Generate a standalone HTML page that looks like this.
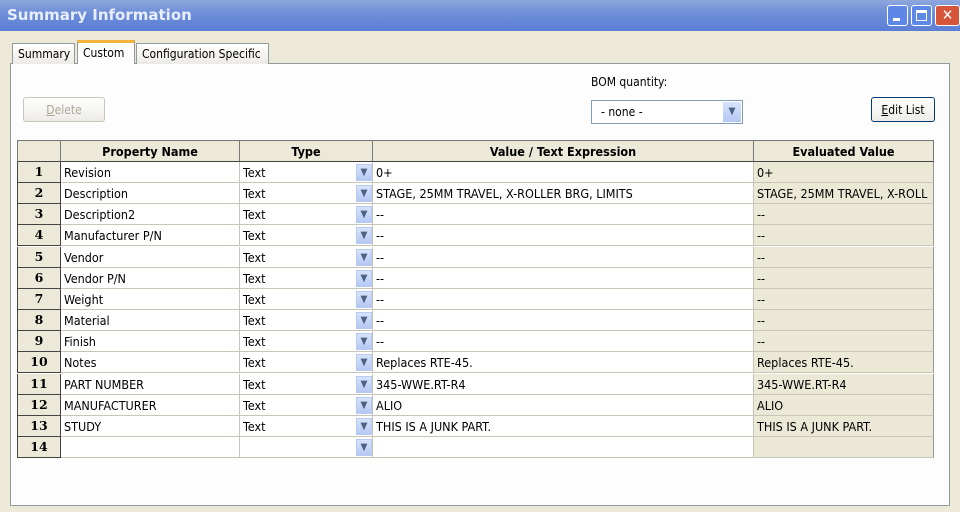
<!DOCTYPE html>
<html><head><style>
*{margin:0;padding:0;box-sizing:border-box}
body{width:960px;height:512px;overflow:hidden;background:#ece9d8;font-family:Tahoma,"DejaVu Sans Condensed","Liberation Sans",sans-serif;font-size:12px;color:#000;position:relative}
.a{position:absolute}
.title{left:0;top:0;width:960px;height:31px;background:linear-gradient(#8fa6dc,#6f8fd8 40%,#5b7fd6);color:#e8eefb;font-weight:bold;font-size:15px;padding:6px 0 0 7px;font-family:"DejaVu Sans","Liberation Sans",sans-serif}
.wb{top:5px;width:21px;height:21px;border:1px solid #fff;border-radius:3px;background:#5d88e8}
.tab{top:43px;height:21px;border:1px solid #919b9c;border-bottom:none;background:linear-gradient(#fff,#ecebe6);padding:3px 5px;font-size:12px;white-space:nowrap}
.panel{left:10px;top:63px;width:940px;height:443px;background:#fdfdfd;border:1px solid #919b9c}
.btn{border:1px solid #003c74;border-radius:3px;background:linear-gradient(#fff,#ecebe6);text-align:center;font-size:12px}
.grid{left:17px;top:140px;width:917px}
.r{position:absolute;left:0;width:917px;height:21px}
.c{position:absolute;top:0;height:21px;border-right:1px solid #c8c6b8;border-bottom:1px solid #c8c6b8;padding:3px 0 0 3px;white-space:nowrap;overflow:hidden;font-size:12.5px}
.n{left:0;width:44px;background:#ece9d8;border:1px solid #444;border-top:none;text-align:center;font-weight:bold;font-family:"DejaVu Serif","Liberation Serif",serif;padding-left:0;padding-top:2px}
.p{left:44px;width:179px;background:#fff}
.t{left:223px;width:133px;background:#fff}
.v{left:356px;width:381px;background:#fff}
.e{left:737px;width:180px;background:#ebe8d6;border-right:1px solid #999}
.dd{position:absolute;left:339px;top:2px;width:16px;height:17px;background:linear-gradient(#d8e4fb,#b4c8f3);border:1px solid #b7c9ee;color:#4d6185;font-size:10px;text-align:center;line-height:15px}
.h{position:absolute;top:0;height:22px;background:#ece9d8;border-right:1px solid #777;border-top:1px solid #777;border-bottom:1px solid #444;text-align:center;font-weight:bold;padding-top:3px;font-size:12.5px}
</style></head><body>
<div class="a title">Summary Information</div>
<div class="a wb" style="left:887px"><div style="position:absolute;left:5px;top:12px;width:7px;height:3px;background:#fff"></div></div>
<div class="a wb" style="left:911px"><div style="position:absolute;left:4px;top:4px;width:11px;height:11px;border:1px solid #fff;border-top-width:3px"></div></div>
<div class="a wb" style="left:935px;width:25px;background:#d6543a;color:#fff;font-weight:bold;font-size:15px;line-height:18px;text-align:center">✕</div>
<div class="a panel"></div>
<div class="a tab" style="left:12px;width:63px">Summary</div>
<div class="a tab" style="left:77px;top:40px;height:24px;width:58px;border-top:3px solid #f4b43c;background:#fdfdfd">Custom</div>
<div class="a tab" style="left:136px;width:133px">Configuration Specific</div>
<div class="a btn" style="left:23px;top:97px;width:82px;height:25px;color:#aca899;border-color:#c9c7ba;padding-top:5px"><u>D</u>elete</div>
<div class="a" style="left:591px;top:75px">BOM quantity:</div>
<div class="a" style="left:591px;top:100px;width:152px;height:24px;background:#fff;border:1px solid #7f9db9;padding:4px 0 0 9px">- none -<div style="position:absolute;right:1px;top:1px;width:18px;height:20px;background:linear-gradient(#d8e4fb,#b4c8f3);color:#4d6185;font-size:10px;text-align:center;line-height:20px">▼</div></div>
<div class="a btn" style="left:871px;top:97px;width:64px;height:25px;padding-top:5px"><u>E</u>dit List</div>
<div class="a grid">
<div class="h" style="left:0;width:44px;border-left:1px solid #777"></div>
<div class="h" style="left:44px;width:179px">Property Name</div>
<div class="h" style="left:223px;width:133px">Type</div>
<div class="h" style="left:356px;width:381px">Value / Text Expression</div>
<div class="h" style="left:737px;width:180px">Evaluated Value</div>
</div>
<div class="a" style="left:17px;top:162px;width:917px">
<div class="r" style="top:0"><div class="c n">1</div><div class="c p">Revision</div><div class="c t">Text</div><div class="dd">▼</div><div class="c v">0+</div><div class="c e">0+</div></div>
<div class="r" style="top:21px"><div class="c n">2</div><div class="c p">Description</div><div class="c t">Text</div><div class="dd">▼</div><div class="c v">STAGE, 25MM TRAVEL, X-ROLLER BRG, LIMITS</div><div class="c e">STAGE, 25MM TRAVEL, X-ROLL</div></div>
<div class="r" style="top:42px"><div class="c n">3</div><div class="c p">Description2</div><div class="c t">Text</div><div class="dd">▼</div><div class="c v">--</div><div class="c e">--</div></div>
<div class="r" style="top:63px"><div class="c n">4</div><div class="c p">Manufacturer P/N</div><div class="c t">Text</div><div class="dd">▼</div><div class="c v">--</div><div class="c e">--</div></div>
<div class="r" style="top:85px"><div class="c n">5</div><div class="c p">Vendor</div><div class="c t">Text</div><div class="dd">▼</div><div class="c v">--</div><div class="c e">--</div></div>
<div class="r" style="top:106px"><div class="c n">6</div><div class="c p">Vendor P/N</div><div class="c t">Text</div><div class="dd">▼</div><div class="c v">--</div><div class="c e">--</div></div>
<div class="r" style="top:127px"><div class="c n">7</div><div class="c p">Weight</div><div class="c t">Text</div><div class="dd">▼</div><div class="c v">--</div><div class="c e">--</div></div>
<div class="r" style="top:148px"><div class="c n">8</div><div class="c p">Material</div><div class="c t">Text</div><div class="dd">▼</div><div class="c v">--</div><div class="c e">--</div></div>
<div class="r" style="top:169px"><div class="c n">9</div><div class="c p">Finish</div><div class="c t">Text</div><div class="dd">▼</div><div class="c v">--</div><div class="c e">--</div></div>
<div class="r" style="top:190px"><div class="c n">10</div><div class="c p">Notes</div><div class="c t">Text</div><div class="dd">▼</div><div class="c v">Replaces RTE-45.</div><div class="c e">Replaces RTE-45.</div></div>
<div class="r" style="top:212px"><div class="c n">11</div><div class="c p">PART NUMBER</div><div class="c t">Text</div><div class="dd">▼</div><div class="c v">345-WWE.RT-R4</div><div class="c e">345-WWE.RT-R4</div></div>
<div class="r" style="top:233px"><div class="c n">12</div><div class="c p">MANUFACTURER</div><div class="c t">Text</div><div class="dd">▼</div><div class="c v">ALIO</div><div class="c e">ALIO</div></div>
<div class="r" style="top:254px"><div class="c n">13</div><div class="c p">STUDY</div><div class="c t">Text</div><div class="dd">▼</div><div class="c v">THIS IS A JUNK PART.</div><div class="c e">THIS IS A JUNK PART.</div></div>
<div class="r" style="top:275px"><div class="c n" style="border-bottom:1px solid #444">14</div><div class="c p"></div><div class="c t"></div><div class="dd">▼</div><div class="c v"></div><div class="c e"></div></div>
</div>
</body></html>
